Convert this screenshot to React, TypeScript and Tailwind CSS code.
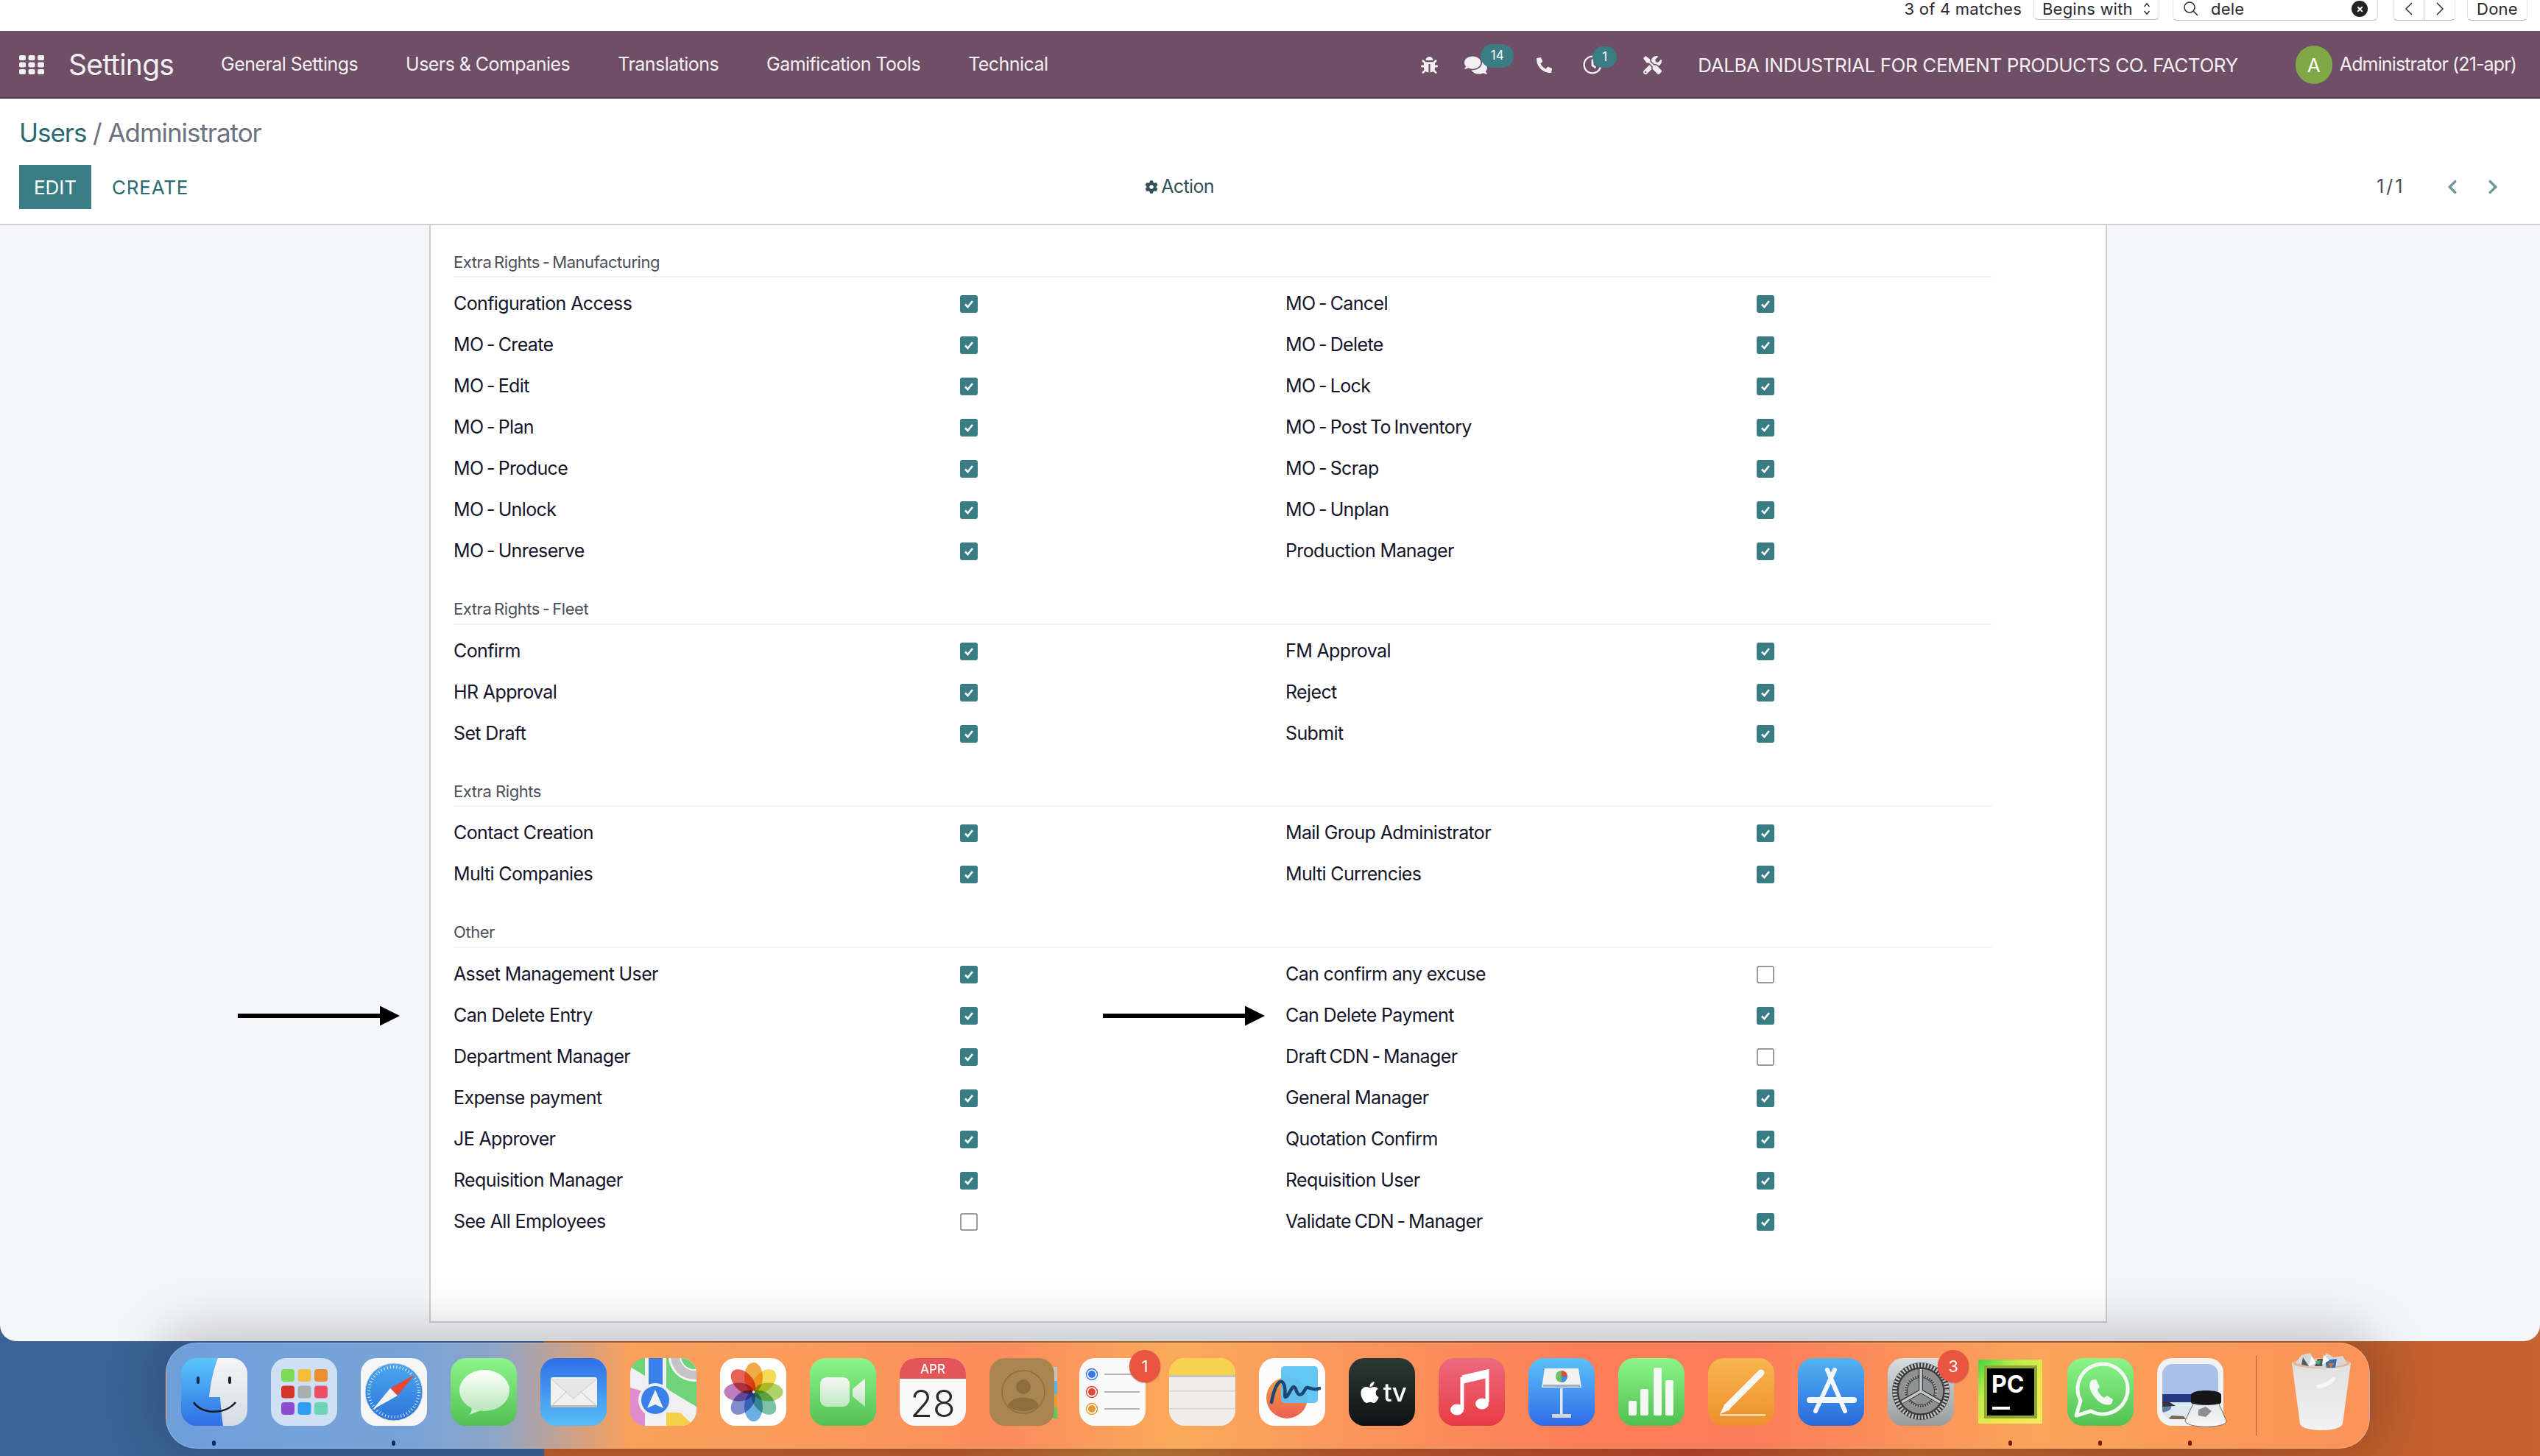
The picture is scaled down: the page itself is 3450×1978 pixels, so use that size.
import type { ReactNode } from 'react';
import { FaApple, FaBug, FaChevronLeft, FaChevronRight, FaCog, FaComments, FaPhoneAlt, FaRegClock, FaTimes, FaTools } from 'react-icons/fa';

type Right = [string, boolean];

const sections: { title: string; rows: [Right, Right][] }[] = [
  {
    title: 'Extra Rights - Manufacturing',
    rows: [
      [['Configuration Access', true], ['MO - Cancel', true]],
      [['MO - Create', true], ['MO - Delete', true]],
      [['MO - Edit', true], ['MO - Lock', true]],
      [['MO - Plan', true], ['MO - Post To Inventory', true]],
      [['MO - Produce', true], ['MO - Scrap', true]],
      [['MO - Unlock', true], ['MO - Unplan', true]],
      [['MO - Unreserve', true], ['Production Manager', true]],
    ],
  },
  {
    title: 'Extra Rights - Fleet',
    rows: [
      [['Confirm', true], ['FM Approval', true]],
      [['HR Approval', true], ['Reject', true]],
      [['Set Draft', true], ['Submit', true]],
    ],
  },
  {
    title: 'Extra Rights',
    rows: [
      [['Contact Creation', true], ['Mail Group Administrator', true]],
      [['Multi Companies', true], ['Multi Currencies', true]],
    ],
  },
  {
    title: 'Other',
    rows: [
      [['Asset Management User', true], ['Can confirm any excuse', false]],
      [['Can Delete Entry', true], ['Can Delete Payment', true]],
      [['Department Manager', true], ['Draft CDN - Manager', false]],
      [['Expense payment', true], ['General Manager', true]],
      [['JE Approver', true], ['Quotation Confirm', true]],
      [['Requisition Manager', true], ['Requisition User', true]],
      [['See All Employees', false], ['Validate CDN - Manager', true]],
    ],
  },
];

const Checkbox = ({ checked }: { checked: boolean }) =>
  checked ? (
    <span className="flex h-[24px] w-[24px] items-center justify-center rounded-[3px] bg-[#3a7c84]">
      <svg width="14" height="12" viewBox="0 0 14 12">
        <path d="M2 6.5 L5.5 10 L12 2" fill="none" stroke="#fff" strokeWidth="2.6" />
      </svg>
    </span>
  ) : (
    <span className="block h-[24px] w-[24px] rounded-[3px] border-2 border-[#9a9a9a] bg-white" />
  );

const Arrow = ({ className }: { className: string }) => (
  <svg className={className} width="220" height="28" viewBox="0 0 220 28">
    <path d="M0 11 H193 V0.5 L220 14 L193 27.5 V17 H0 Z" fill="#000" />
  </svg>
);

const Row = ({ label, checked, arrow }: { label: string; checked: boolean; arrow?: ReactNode }) => (
  <>
    <div
      className={`relative flex h-[56px] items-center text-[25px] tracking-[-0.025em] whitespace-pre text-[#14142a] ${
        label.includes(' - ') ? '[word-spacing:-0.07em]' : ''
      }`}
    >
      {arrow}
      <span>{label}</span>
    </div>
    <div className="flex h-[56px] items-center">
      <Checkbox checked={checked} />
    </div>
  </>
);

const Tile = ({ bg, children }: { bg: string; children: ReactNode }) => (
  <svg width="90" height="92" viewBox="0 0 90 92" className="block">
    <rect x="0" y="0" width="90" height="92" rx="21" fill={bg} />
    {children}
  </svg>
);

const Grad = ({ id, a, b }: { id: string; a: string; b: string }) => (
  <defs>
    <linearGradient id={id} x1="0" y1="0" x2="0" y2="1">
      <stop offset="0" stopColor={a} />
      <stop offset="1" stopColor={b} />
    </linearGradient>
  </defs>
);

const Finder = () => (
  <svg width="90" height="92" viewBox="0 0 90 92">
    <Grad id="fa" a="#5ac8fa" b="#2f6de6" />
    <Grad id="fb" a="#f5f5f5" b="#d5dbe6" />
    <rect width="90" height="92" rx="21" fill="url(#fa)" />
    <path d="M50 0 H69 A21 21 0 0 1 90 21 V71 A21 21 0 0 1 69 92 H57 C55 80 54 66 53 53 H38 C40 34 44 15 50 0 Z" fill="url(#fb)" />
    <rect x="21" y="25" width="4" height="10" rx="2" fill="#1e2a44" />
    <rect x="64" y="25" width="4" height="10" rx="2" fill="#222" />
    <path d="M17 60 C28 77 60 77 74 60" fill="none" stroke="#1a1a1a" strokeWidth="2.6" />
  </svg>
);

const Launchpad = () => {
  const colors = ['#7ed957', '#f6bd3b', '#e98f32', '#d8352a', '#a9aeb0', '#ec4f63', '#8f4bd0', '#2f9cf5', '#6cd3b4'];
  return (
    <Tile bg="#d0e0f4">
      {colors.map((c, i) => (
        <rect key={c} x={14 + (i % 3) * 22.5} y={15 + Math.floor(i / 3) * 22.5} width="18" height="17" rx="4" fill={c} />
      ))}
    </Tile>
  );
};

const Safari = () => (
  <Tile bg="#f6f6f6">
    <Grad id="sa" a="#4aa8ee" b="#2e74dc" />
    <circle cx="45" cy="46" r="39" fill="url(#sa)" stroke="#d5d5d5" strokeWidth="1" />
    <circle cx="45" cy="46" r="34" fill="none" stroke="#fff" strokeWidth="4" strokeDasharray="1 3.3" opacity="0.85" />
    <path d="M74 22 L50 51 L40 41 Z" fill="#e4483a" />
    <path d="M16 70 L40 41 L50 51 Z" fill="#f2f2f2" />
  </Tile>
);

const Messages = () => (
  <Tile bg="url(#ma)">
    <Grad id="ma" a="#8df589" b="#52c154" />
    <Grad id="mb" a="#ffffff" b="#b9e6bb" />
    <path d="M25 77 C29 73 29 71 28 64 L44 70 Z" fill="#cfeecf" />
    <ellipse cx="46" cy="44" rx="34" ry="28" fill="url(#mb)" />
  </Tile>
);

const Mail = () => (
  <Tile bg="url(#la)">
    <Grad id="la" a="#2f6fe8" b="#58bdf5" />
    <rect x="14" y="26" width="63" height="41" rx="3" fill="#f0f0f0" />
    <path d="M14 28 L45 55 L77 28" fill="#e6e6e6" stroke="#cfcfcf" strokeWidth="1" />
    <path d="M14 66 L36 45 M77 66 L54 45" stroke="#cfcfcf" strokeWidth="1.2" />
    <rect x="14" y="64" width="63" height="3" fill="#bdbdbd" />
  </Tile>
);

const Maps = () => (
  <svg width="90" height="92" viewBox="0 0 90 92">
    <defs>
      <clipPath id="mc">
        <rect width="90" height="92" rx="21" />
      </clipPath>
    </defs>
    <g clipPath="url(#mc)">
      <rect width="90" height="92" fill="#6fd37a" />
      <circle cx="87" cy="-3" r="35" fill="#f4f4f4" />
      <circle cx="87" cy="-3" r="32" fill="#c4c4c6" />
      <circle cx="87" cy="-3" r="20" fill="#f0f0f0" />
      <circle cx="87" cy="-3" r="18" fill="#6fd37a" />
      <path d="M0 12 L90 66 V92 H60 L0 40 Z" fill="#f0f0f2" />
      <path d="M0 40 L20 46 V92 H0 Z" fill="#de8ccb" />
      <path d="M49 74 L68 74 L86 92 H49 Z" fill="#f5cf48" />
      <rect x="20" y="0" width="29" height="92" fill="#f2f2f4" />
      <rect x="25" y="0" width="19" height="50" fill="#3a80ea" />
      <circle cx="34" cy="57" r="23" fill="#eceef2" />
      <circle cx="34" cy="57" r="19" fill="#3a80ea" />
      <path d="M34 43 L45 68 L34 63 L23 68 Z" fill="#f2f2f2" strokeLinejoin="round" />
    </g>
  </svg>
);

const Photos = () => {
  const petals = ['#f2a63c', '#f7dc4a', '#a9d258', '#74c0a0', '#62a8e2', '#7884cc', '#bc74b8', '#e8584a'];
  return (
    <Tile bg="#fcfcfc">
      {petals.map((c, i) => (
        <ellipse
          key={c}
          cx="45.5"
          cy="26"
          rx="12.5"
          ry="20"
          fill={c}
          opacity="0.92"
          className="mix-blend-multiply"
          transform={`rotate(${i * 45} 45.5 46)`}
        />
      ))}
      <circle cx="45.5" cy="46" r="1.8" fill="#fff" />
    </Tile>
  );
};

const FaceTime = () => (
  <Tile bg="url(#fc)">
    <Grad id="fc" a="#8df589" b="#52c154" />
    <Grad id="fd" a="#f6f6f6" b="#bfe8c0" />
    <rect x="14" y="26" width="40" height="40" rx="9" fill="url(#fd)" />
    <path d="M58 42 L75 28 V66 L58 52 Z" fill="url(#fd)" strokeLinejoin="round" />
  </Tile>
);

const Calendar = () => (
  <svg width="90" height="92" viewBox="0 0 90 92">
    <defs>
      <clipPath id="cc">
        <rect width="90" height="92" rx="21" />
      </clipPath>
    </defs>
    <g clipPath="url(#cc)">
      <rect width="90" height="92" fill="#f8f8f8" />
      <rect width="90" height="28" fill="#e2565a" />
    </g>
    <text x="45" y="21" textAnchor="middle" fontFamily="Inter, sans-serif" fontSize="17" fontWeight="500" fill="#fff">APR</text>
    <text x="45" y="80" textAnchor="middle" fontFamily="Inter, sans-serif" fontSize="50" fontWeight="300" fill="#2a2a2a">28</text>
  </svg>
);

const Contacts = () => (
  <svg width="96" height="92" viewBox="0 0 96 92">
    <rect x="80" y="12" width="12" height="19" fill="#c9c4b8" />
    <rect x="80" y="31" width="12" height="18" fill="#58b4ea" />
    <rect x="80" y="49" width="12" height="18" fill="#eb9a30" />
    <rect x="80" y="67" width="12" height="15" fill="#62c85c" />
    <rect width="88" height="92" rx="21" fill="#a9854f" />
    <circle cx="46" cy="46" r="29" fill="none" stroke="#8d6e3e" strokeWidth="1.6" />
    <circle cx="46" cy="39" r="10" fill="#8d6e3e" />
    <path d="M25 64 C30 50 62 50 67 64 C60 75 32 75 25 64 Z" fill="#8d6e3e" />
  </svg>
);

const Reminders = () => (
  <Tile bg="#fafafa">
    {[['#3478ea', 22], ['#e0473c', 46], ['#e8962e', 69]].map(([c, y]) => (
      <g key={String(c)}>
        <circle cx="17" cy={Number(y)} r="7.5" fill="none" stroke={String(c)} strokeWidth="1.4" />
        <circle cx="17" cy={Number(y)} r="5" fill={String(c)} />
        <rect x="34" y={Number(y) - 1} width="48" height="2" fill="#b5b5b5" />
      </g>
    ))}
  </Tile>
);

const Notes = () => (
  <svg width="90" height="92" viewBox="0 0 90 92">
    <defs>
      <clipPath id="nc">
        <rect width="90" height="92" rx="21" />
      </clipPath>
    </defs>
    <g clipPath="url(#nc)">
      <rect width="90" height="92" fill="#efeeea" />
      <rect width="90" height="23" fill="#f7d24e" />
      <rect y="23" width="90" height="3" fill="#c4c2bc" />
      <rect y="44" width="90" height="1.5" fill="#d4d3cf" />
      <rect y="68" width="90" height="1.5" fill="#d4d3cf" />
    </g>
  </svg>
);

const Freeform = () => (
  <Tile bg="#fbfbfb">
    <Grad id="ff" a="#f2a13a" b="#ec5f55" />
    <circle cx="38" cy="54" r="28" fill="url(#ff)" />
    <rect x="30" y="11" width="50" height="50" rx="5" fill="#5cc3f2" opacity="0.95" />
    <path d="M17 60 C22 34 30 26 34 36 C38 46 32 56 38 52 C44 44 46 34 50 42 C54 56 60 48 63 42 C66 36 72 46 82 41" fill="none" stroke="#1c4775" strokeWidth="4.5" strokeLinecap="round" />
  </Tile>
);

const AppleTv = () => (
  <div className="flex h-[92px] w-[90px] items-center justify-center gap-[2px] rounded-[21px] bg-[linear-gradient(180deg,#2c3a33,#0e1213)] text-white">
    <FaApple size={33} />
    <span className="text-[35px] leading-none font-medium tracking-[-0.02em]">tv</span>
  </div>
);

const Music = () => (
  <Tile bg="url(#mu)">
    <Grad id="mu" a="#ec6a7e" b="#e83c44" />
    <path d="M32 26 L66 18 V60" fill="none" stroke="#fff" strokeWidth="5" />
    <path d="M32 26 V70" fill="none" stroke="#fff" strokeWidth="5" />
    <path d="M32 24 L66 16 V27 L32 35 Z" fill="#fff" />
    <ellipse cx="25" cy="70" rx="9" ry="7.5" fill="#fff" />
    <ellipse cx="59" cy="62" rx="9" ry="7.5" fill="#fff" />
  </Tile>
);

const Keynote = () => (
  <Tile bg="url(#ke)">
    <Grad id="ke" a="#5cc1fa" b="#2f6be8" />
    <path d="M22 14 H68 L72 40 H18 Z" fill="#f2f2f2" />
    <circle cx="45" cy="25" r="8" fill="#6cc060" />
    <path d="M45 25 V17 A8 8 0 0 1 53 25 Z" fill="#e0483c" />
    <path d="M45 25 H53 A8 8 0 0 1 45 33 Z" fill="#3c8ee8" />
    <rect x="20" y="36" width="50" height="3" fill="#9fb0c0" />
    <rect x="43" y="41" width="3.5" height="36" fill="#e6e6e6" />
    <rect x="32" y="76" width="26" height="5" rx="1" fill="#d5d5d5" />
  </Tile>
);

const Numbers = () => (
  <Tile bg="url(#nu)">
    <Grad id="nu" a="#8df589" b="#4fc04f" />
    <rect x="14" y="58" width="11" height="20" rx="2" fill="#f2f8f2" />
    <rect x="30" y="42" width="11" height="36" rx="2" fill="#f2f8f2" />
    <rect x="48" y="13" width="11" height="65" rx="2" fill="#f2f8f2" />
    <rect x="64" y="30" width="11" height="48" rx="2" fill="#f2f8f2" />
  </Tile>
);

const Pages = () => (
  <Tile bg="url(#pa)">
    <Grad id="pa" a="#f7b64c" b="#ee8f2e" />
    <path d="M72 20 L26 66" stroke="#f8f6f2" strokeWidth="9" strokeLinecap="round" />
    <path d="M23 62 L30 70 L16 76 Z" fill="#f8f6f2" />
    <rect x="16" y="76" width="62" height="3" rx="1" fill="#f4d2a0" />
  </Tile>
);

const AppStore = () => (
  <Tile bg="url(#ap)">
    <Grad id="ap" a="#52b4f2" b="#2a68dc" />
    <g stroke="#f4f8fc" strokeLinecap="round" fill="none">
      <path d="M40 16 L64 72" strokeWidth="6" />
      <path d="M50 16 L24 72" strokeWidth="6" />
      <path d="M16 57 H76" strokeWidth="8" />
    </g>
  </Tile>
);

const SystemPrefs = () => (
  <Tile bg="url(#sp)">
    <Grad id="sp" a="#d8dde0" b="#9a9c9c" />
    <circle cx="45" cy="45" r="39" fill="#3a3a3a" />
    <circle cx="45" cy="45" r="35.5" fill="none" stroke="#c6c8ca" strokeWidth="6" strokeDasharray="2.2 2.2" />
    <circle cx="45" cy="45" r="31" fill="#8e8f90" stroke="#3c3c3c" strokeWidth="1.5" />
    <circle cx="45" cy="45" r="22" fill="#444" />
    <circle cx="45" cy="45" r="21" fill="none" stroke="#a8a9aa" strokeWidth="4" strokeDasharray="1.6 1.8" />
    <circle cx="45" cy="45" r="18" fill="#909192" />
    <path d="M45 45 V14 M45 45 L18 60 M45 45 L72 60" stroke="#3a3a3a" strokeWidth="6" />
    <path d="M45 45 V15 M45 45 L19 60 M45 45 L71 60" stroke="#c8c9ca" strokeWidth="3.5" />
  </Tile>
);

const PyCharm = () => (
  <svg width="90" height="92" viewBox="0 0 90 92">
    <defs>
      <linearGradient id="py" x1="0" y1="0" x2="1" y2="1">
        <stop offset="0" stopColor="#45d43e" />
        <stop offset="0.3" stopColor="#b8ec4c" />
        <stop offset="0.65" stopColor="#f0e84c" />
        <stop offset="1" stopColor="#f2ec60" />
      </linearGradient>
    </defs>
    <rect x="1" y="2" width="87" height="87" fill="url(#py)" />
    <rect x="9" y="10" width="72" height="72" fill="#8ea82f" />
    <rect x="13" y="14" width="64" height="64" fill="#000" />
    <text x="19" y="47" fontFamily="Inter, sans-serif" fontWeight="700" fontSize="32" fill="#fff">PC</text>
    <rect x="20" y="66" width="24" height="4" fill="#fff" />
  </svg>
);

const WhatsApp = () => (
  <Tile bg="url(#wa)">
    <Grad id="wa" a="#8df589" b="#52c154" />
    <path d="M12 78 L18 58 A34 34 0 1 1 32 72 Z" fill="none" stroke="#f2f8f2" strokeWidth="5" strokeLinejoin="round" />
    <path d="M33 30 C28 34 30 44 37 53 C44 62 54 66 60 62 L62 56 L54 51 L50 54 C46 52 42 47 41 43 L44 39 L39 29 Z" fill="#f2f8f2" />
  </Tile>
);

const Preview = () => (
  <div className="relative h-[92px] w-[90px]">
    <svg width="100" height="100" viewBox="0 0 100 100" className="absolute top-0 left-0">
      <Grad id="pg" a="#e2e4e6" b="#f8f8f8" />
      <defs>
        <clipPath id="pv">
          <rect x="7" y="8" width="76" height="75" rx="14" />
        </clipPath>
      </defs>
      <rect width="90" height="92" rx="20" fill="#f2f2f4" />
      <g clipPath="url(#pv)">
        <rect x="7" y="8" width="76" height="42" fill="#a8c0ea" />
        <rect x="7" y="49" width="76" height="12" fill="#233a80" />
        <rect x="7" y="60" width="76" height="24" fill="#dbe8f0" />
        <path d="M7 60 C20 62 26 70 7 74 Z" fill="#5a7fa8" />
        <path d="M7 59 L17 60 L25 65 L7 66 Z" fill="#34343a" />
        <path d="M13 84 L20 78 L36 79 L40 84 Z" fill="#7a6a55" />
      </g>
      <path d="M50 60 H83 L94 85 C96 96 38 96 38 85 Z" fill="url(#pg)" stroke="#6a6a6a" strokeWidth="1" />
      <path d="M56 70 L66 66 L74 72 L66 80 L56 78 Z" fill="#8a8e94" />
      <path d="M46 50 C46 42 87 42 87 50 V60 C87 65 46 65 46 60 Z" fill="#161616" />
    </svg>
  </div>
);

const Trash = () => (
  <svg width="82" height="106" viewBox="0 0 82 106" className="block">
    <Grad id="tr" a="#dfdfe0" b="#f2f2f2" />
    <path d="M1 14 C1 8 81 8 81 14 L70 96 C68 108 14 108 12 96 Z" fill="url(#tr)" />
    <ellipse cx="41" cy="14" rx="39" ry="7" fill="#e8b49a" />
    <path d="M6 13 L14 3 L26 0 L30 10 L44 8 L48 0 L58 6 L70 4 L76 14 C60 22 22 22 6 13 Z" fill="#d8d8d8" />
    <path d="M16 6 L24 18 L14 16 Z M36 8 L46 8 L42 18 L32 18 Z" fill="#555a60" />
    <path d="M30 12 L40 10 L38 16 Z" fill="#4cb46a" />
    <path d="M46 10 L62 8 L60 20 L48 20 Z" fill="#3c6ea8" />
    <path d="M50 14 L58 14 L54 20 Z" fill="#d8762e" />
    <path d="M28 4 L34 14 L24 18 Z M44 2 L52 10 L42 16 Z" fill="#fafafa" />
    <path d="M34 44 C44 42 52 38 58 32 L60 36 C54 44 44 48 36 48 Z" fill="#fff" opacity="0.7" />
  </svg>
);

const Dot = ({ color }: { color: string }) => (
  <span className={`absolute bottom-[-27px] left-[42px] h-[7px] w-[5px] rounded-full ${color}`} />
);

const Badge = ({ n }: { n: string }) => (
  <span className="absolute top-[-11px] right-[-20px] flex h-[44px] w-[42px] items-center justify-center rounded-full bg-[#ea5440] text-[22px] text-white shadow-[0_1px_2px_rgba(0,0,0,0.3)]">
    {n}
  </span>
);

const dockApps: { node: ReactNode; dot?: string; badge?: string }[] = [
  { node: <Finder />, dot: 'bg-[#0b2a6e]' },
  { node: <Launchpad /> },
  { node: <Safari />, dot: 'bg-[#0b2a6e]' },
  { node: <Messages /> },
  { node: <Mail /> },
  { node: <Maps /> },
  { node: <Photos /> },
  { node: <FaceTime /> },
  { node: <Calendar /> },
  { node: <Contacts /> },
  { node: <Reminders />, badge: '1' },
  { node: <Notes /> },
  { node: <Freeform /> },
  { node: <AppleTv /> },
  { node: <Music /> },
  { node: <Keynote /> },
  { node: <Numbers /> },
  { node: <Pages /> },
  { node: <AppStore /> },
  { node: <SystemPrefs />, badge: '3' },
  { node: <PyCharm />, dot: 'bg-[#7c1c0c]' },
  { node: <WhatsApp />, dot: 'bg-[#7c1c0c]' },
  { node: <Preview />, dot: 'bg-[#7c1c0c]' },
];

const FindBar = () => (
  <div className="flex h-[42px] items-start justify-end overflow-hidden bg-white pr-[17px] text-[22px] leading-[24px] tracking-[0.01em] text-[#2a2a2e]">
    <span className="mr-[16px]">3 of 4 matches</span>
    <div className="-mt-[3px] mr-[18px] flex h-[30px] w-[171px] items-center justify-between rounded-b-[6px] border-x border-b border-[#e2e2e2] border-b-[#b9b9b9] bg-white px-[11px]">
      Begins with
      <svg width="10" height="18" viewBox="0 0 10 18">
        <path d="M1.5 6 L5 2 L8.5 6 M1.5 12 L5 16 L8.5 12" fill="none" stroke="#333" strokeWidth="1.6" />
      </svg>
    </div>
    <div className="-mt-[3px] mr-[20px] flex h-[31px] w-[279px] items-center rounded-b-[6px] border-x border-b border-[#e2e2e2] border-b-[#b9b9b9] bg-white px-[13px]">
      <svg width="22" height="22" viewBox="0 0 22 22">
        <circle cx="9" cy="9" r="7" fill="none" stroke="#333" strokeWidth="1.6" />
        <path d="M14 14 L20 20" stroke="#333" strokeWidth="1.6" />
      </svg>
      <span className="ml-[16px]">dele</span>
      <span className="ml-auto flex h-[22px] w-[22px] items-center justify-center rounded-full bg-[#222] text-white">
        <FaTimes size={11} />
      </span>
    </div>
    <div className="-mt-[3px] mr-[16px] flex h-[31px] w-[85px] rounded-b-[6px] border-x border-b border-[#e2e2e2] border-b-[#b0b0b0] bg-white">
      <span className="flex flex-1 items-center justify-center border-r border-[#cfcfcf]">
        <svg width="12" height="20" viewBox="0 0 12 20">
          <path d="M10 2 L2 10 L10 18" fill="none" stroke="#333" strokeWidth="1.5" />
        </svg>
      </span>
      <span className="flex flex-1 items-center justify-center">
        <svg width="12" height="20" viewBox="0 0 12 20">
          <path d="M2 2 L10 10 L2 18" fill="none" stroke="#333" strokeWidth="1.5" />
        </svg>
      </span>
    </div>
    <div className="-mt-[3px] flex h-[31px] w-[82px] items-center justify-center rounded-b-[6px] border-x border-b border-[#e2e2e2] border-b-[#b0b0b0] bg-white">
      Done
    </div>
  </div>
);

const Count = ({ n, className }: { n: string; className: string }) => (
  <span className={`absolute flex items-center justify-center rounded-full bg-[#3a7c84] text-[17px] text-white ${className}`}>
    {n}
  </span>
);

const NavBar = () => (
  <div className="flex h-[92px] items-center border-b-[2px] border-[#4f3a4b] bg-[#6e4f66] pt-[2px] pl-[26px] text-[#f3eff2]">
    <svg width="34" height="26" viewBox="0 0 34 26">
      {[0, 1, 2, 3, 4, 5, 6, 7, 8].map((i) => (
        <rect key={i} x={(i % 3) * 12.5} y={Math.floor(i / 3) * 9.5} width="9" height="7" rx="2" fill="#f3eff2" />
      ))}
    </svg>
    <span className="ml-[33px] text-[39px] tracking-[-0.02em]">Settings</span>
    <nav className="ml-[64px] flex gap-[65px] text-[25px] tracking-[-0.022em]">
      <span>General Settings</span>
      <span>Users &amp; Companies</span>
      <span>Translations</span>
      <span>Gamification Tools</span>
      <span>Technical</span>
    </nav>
    <div className="ml-auto flex items-center pr-[32px]">
      <FaBug size={23} />
      <span className="relative ml-[36px] flex">
        <FaComments size={31} />
        <Count n="14" className="top-[-13px] left-[22px] h-[32px] w-[45px]" />
      </span>
      <span className="ml-[67px] flex">
        <FaPhoneAlt size={21} />
      </span>
      <span className="relative ml-[42px] flex">
        <FaRegClock size={26} />
        <Count n="1" className="top-[-12px] left-[13px] h-[29px] w-[33px]" />
      </span>
      <FaTools size={25} className="ml-[56px]" />
      <span className="ml-[49px] text-[26px] tracking-[-0.016em] whitespace-nowrap">DALBA INDUSTRIAL FOR CEMENT PRODUCTS CO. FACTORY</span>
      <span className="ml-[78px] flex h-[52px] w-[50px] items-center justify-center rounded-full bg-[#7fa846] text-[26px] text-white">A</span>
      <span className="ml-[10px] text-[25px] tracking-[-0.035em] whitespace-nowrap">Administrator (21-apr)</span>
    </div>
  </div>
);

const ControlPanel = () => (
  <div className="flex h-[172px] flex-col border-b-[2px] border-[#cfcfd4] bg-white pl-[26px]">
    <div className="mt-[24px] text-[35px] leading-[44px] tracking-[-0.03em] text-[#6b7280]">
      <span className="text-[#2a6a72]">Users</span> / Administrator
    </div>
    <div className="mt-[22px] flex items-center text-[26px]">
      <span className="flex h-[60px] w-[98px] items-center justify-center bg-[#3a7c84] text-white">EDIT</span>
      <span className="ml-[28px] tracking-[0.03em] text-[#2a6a72]">CREATE</span>
      <span className="ml-[1299px] flex items-center gap-[4px] text-[25px] tracking-[-0.025em] text-[#33505a]">
        <FaCog size={18} />
        Action
      </span>
      <span className="ml-[1579px] text-[25px] tracking-[-0.02em] text-[#4a4f57] [word-spacing:-0.12em]">1 / 1</span>
      <FaChevronLeft size={22} className="ml-[57px] text-[#6e969c]" />
      <FaChevronRight size={22} className="ml-[33px] text-[#6e969c]" />
    </div>
  </div>
);

const Sheet = () => (
  <div className="ml-[583px] h-[1491px] w-[2279px] border-x-2 border-b-2 border-[#cfcfd4] bg-white pt-[31px] pl-[31px]">
    <div className="flex w-[2089px] flex-col gap-[31.5px]">
      {sections.map((s) => (
        <section key={s.title}>
          <div
            className={`mb-[8px] flex h-[40px] items-center border-b-2 border-[#f2f2f4] text-[22px] tracking-[-0.02em] text-[#4c4f5a] ${
              s.title.includes(' - ') ? '[word-spacing:-0.09em]' : ''
            }`}
          >
            {s.title}
          </div>
          <div className="grid grid-cols-[688px_442px_640px_1fr]">
            {s.rows.flatMap(([a, b]) => [
              <Row
                key={a[0]}
                label={a[0]}
                checked={a[1]}
                arrow={a[0] === 'Can Delete Entry' ? <Arrow className="absolute top-[14px] left-[-293px]" /> : undefined}
              />,
              <Row
                key={b[0]}
                label={b[0]}
                checked={b[1]}
                arrow={b[0] === 'Can Delete Payment' ? <Arrow className="absolute top-[14px] left-[-248px]" /> : undefined}
              />,
            ])}
          </div>
        </section>
      ))}
    </div>
  </div>
);

const Dock = () => (
  <div className="relative z-10 mt-[2px] ml-[225px] flex h-[144px] w-[2994px] items-start rounded-[42px] border border-[#ffffff44] bg-[linear-gradient(90deg,#6f9fdb_0%,#78a3d8_11%,#8ea6c8_15%,#d8a07c_19%,#f9a05a_21%,#fb9a5a_30%,#fb8c5c_38%,#fbaa5a_46%,#fb9a5c_52%,#fc7f58_64%,#fc7c5a_72%,#fb8f5a_78%,#fba45a_85%,#fb9a58_92%,#fb9358_100%)] pt-[20px] pl-[20px] shadow-[0_-8px_70px_12px_rgba(0,0,0,0.2)]">
    <div className="flex gap-[32px]">
      {dockApps.map((app, i) => (
        <div key={i} className="relative h-[92px] w-[90px] text-white">
          {app.node}
          {app.dot && <Dot color={app.dot} />}
          {app.badge && <Badge n={app.badge} />}
        </div>
      ))}
    </div>
    <div className="mt-[-3px] ml-[44px] h-[108px] w-px bg-[#b9551e]" />
    <div className="mt-[-7px] ml-[47px]">
      <Trash />
    </div>
  </div>
);

export default function App() {
  return (
    <div className="h-[1978px] w-[3450px] overflow-hidden bg-[linear-gradient(90deg,#3a6496_0,#3a6496_738px,#c0622f_740px,#bb5a2e_1300px,#bb7a35_1540px,#bc5a2e_1800px,#b9462a_2300px,#c0682f_2600px,#b45a2c_2900px,#c8622e_3450px)] font-[Inter,sans-serif]">
      <div className="h-[1822px] overflow-hidden rounded-b-[22px] bg-[#f5f6fa]">
        <FindBar />
        <NavBar />
        <ControlPanel />
        <Sheet />
      </div>
      <Dock />
    </div>
  );
}
